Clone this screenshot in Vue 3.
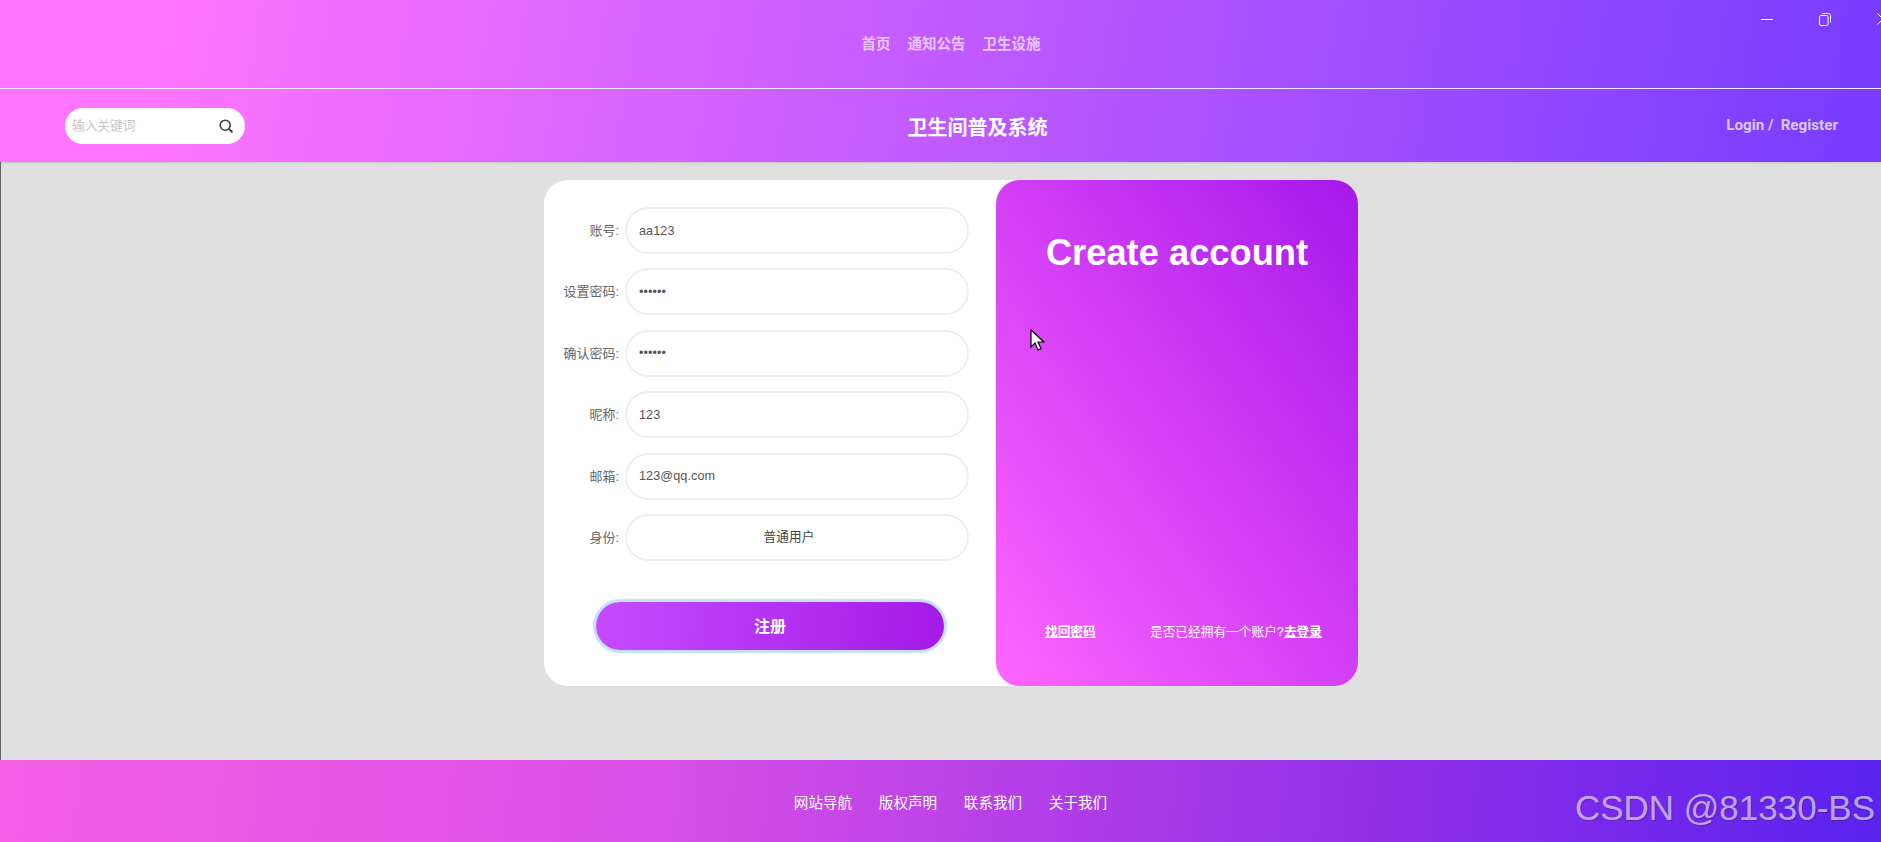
<template>
  <div class="page">
    <div class="top-bar">
      <div class="nav">
        <a v-for="item in navItems" :key="item">{{ item }}</a>
      </div>
      <div class="win-controls">
        <svg width="12" height="12" viewBox="0 0 12 12"><path d="M0 6.5h12" stroke="#fff" fill="none" /></svg>
        <svg width="12" height="14" viewBox="0 0 12 14"><rect x="0.5" y="3.5" width="8.5" height="10" rx="1.5" stroke="#fff" fill="none" /><path d="M3 1.5h6.5a2 2 0 0 1 2 2v7" stroke="#fff" fill="none" /></svg>
        <svg width="12" height="12" viewBox="0 0 12 12"><path d="M0.5 0.5l11 11M11.5 0.5l-11 11" stroke="#fff" fill="none" /></svg>
      </div>
      <div class="header">
        <div class="search">
          <input type="text" placeholder="输入关键词" />
          <svg width="14" height="14" viewBox="0 0 14 14"><circle cx="6.2" cy="6.2" r="5" stroke="#39404f" stroke-width="1.6" fill="none" /><path d="M10 10l3.400 3.400" stroke="#39404f" stroke-width="2" fill="none" /></svg>
        </div>
        <h1 class="title">卫生间普及系统</h1>
        <div class="login-links"><span>Login /</span><span>Register</span></div>
      </div>
    </div>

    <div class="main">
      <div class="card">
        <form class="form" @submit.prevent>
          <div class="row" v-for="field in fields" :key="field.label">
            <label>{{ field.label }}:</label>
            <input :type="field.type" :value="field.value" readonly />
          </div>
          <div class="row">
            <label>身份:</label>
            <select class="role">
              <option>普通用户</option>
            </select>
          </div>
          <button class="submit" type="submit">注册</button>
        </form>
        <div class="side">
          <h2>Create account</h2>
          <div class="side-links">
            <a class="link">找回密码</a>
            <span>是否已经拥有一个账户?<a class="link">去登录</a></span>
          </div>
        </div>
      </div>
    </div>

    <div class="footer">
      <a v-for="item in footerItems" :key="item">{{ item }}</a>
    </div>

    <div class="watermark">CSDN @81330-BS</div>
    <svg class="cursor" width="15" height="22" viewBox="0 0 15 22"><path d="M1 1v17l4-4 3 7 3-1.400-3-6.600h6z" fill="#fff" stroke="#000" stroke-width="1.200" /></svg>
  </div>
</template>

<script setup>
const navItems = ['首页', '通知公告', '卫生设施']
const footerItems = ['网站导航', '版权声明', '联系我们', '关于我们']

const fields = [
  { label: '账号', type: 'text', value: 'aa123' },
  { label: '设置密码', type: 'password', value: '123456' },
  { label: '确认密码', type: 'password', value: '123456' },
  { label: '昵称', type: 'text', value: '123' },
  { label: '邮箱', type: 'text', value: '123@qq.com' },
]
</script>

<style>
html,
body {
  margin: 0;
  background: #e0e0e0;
}
</style>

<style scoped>
.page {
  position: relative;
  height: 842px;
  overflow: hidden;
  display: flex;
  flex-direction: column;
  box-shadow: inset 1px 0 0 #666;
  font-family: "Liberation Sans", "Noto Sans CJK SC", sans-serif;
}

.top-bar {
  position: relative;
  height: 162px;
  flex: none;
  background: linear-gradient(100deg, #ff75ff 8%, #7a3dff 98%);
  box-shadow: 0 1px 2px rgba(0, 0, 0, 0.12);
}

.nav {
  height: 89px;
  box-sizing: border-box;
  padding: 0 0 4px 21px;
  display: flex;
  align-items: center;
  justify-content: center;
  gap: 17px;
  border-bottom: 1px solid #f1e4ff;
  font-size: 14.5px;
  font-weight: bold;
  color: rgba(255, 255, 255, 0.68);
}

.win-controls {
  position: absolute;
  top: 12px;
  left: 1761px;
  display: flex;
  align-items: center;
  gap: 46px;
}

.win-controls svg {
  flex: none;
}

.header {
  height: 73px;
  padding: 0 43px 0 65px;
  display: flex;
  align-items: center;
  justify-content: space-between;
}

.search {
  width: 180px;
  height: 36px;
  box-sizing: border-box;
  padding: 0 12px 0 7px;
  display: flex;
  align-items: center;
  justify-content: space-between;
  background: #fff;
  border-radius: 18px;
}

.search input {
  width: 120px;
  padding: 0;
  border: none;
  outline: none;
  background: transparent;
  font-size: 12.7px;
  font-family: inherit;
}

.search input::placeholder {
  color: #c6c6c6;
}

.title {
  margin: 1px 16px 0 0;
  font-size: 20px;
  font-weight: bold;
  color: #fff;
}

.login-links {
  display: flex;
  gap: 7px;
  font-family: Roboto, "Liberation Sans", sans-serif;
  font-size: 15.2px;
  font-weight: bold;
  color: rgba(255, 255, 255, 0.72);
  margin-bottom: 1px;
}

.main {
  flex: 1;
  padding: 18px 0 0 544px;
}

.card {
  width: 814px;
  height: 506px;
  display: flex;
  background: #fff;
  border-radius: 24px;
}

.form {
  width: 452px;
  flex: none;
  box-sizing: border-box;
  padding: 27px 0 0 10px;
}

.row {
  display: flex;
  align-items: center;
  gap: 6px;
  margin-bottom: 14.4px;
}

.row label {
  width: 65px;
  flex: none;
  padding-bottom: 2px;
  text-align: right;
  white-space: nowrap;
  font-size: 13px;
  color: #666;
}

.row input,
.role {
  width: 344px;
  height: 47px;
  box-sizing: border-box;
  padding: 0 12px;
  border: 2px solid #ebeef2;
  border-radius: 24px;
  outline: none;
  background: #fff;
  font-family: inherit;
  font-size: 12.6px;
  letter-spacing: 0.1px;
  color: #555;
}

.role {
  appearance: none;
  text-align-last: center;
  padding-right: 28px;
  color: #444;
}

.submit {
  display: block;
  width: 348px;
  height: 48px;
  margin: 41px 0 0 42px;
  padding-bottom: 3px;
  border: none;
  border-radius: 24px;
  background: linear-gradient(100deg, #c64cff, #a31ae6);
  box-shadow: 0 0 0 3px #c4e1fd;
  font-family: inherit;
  font-size: 16px;
  font-weight: bold;
  color: #fff;
}

.side {
  width: 362px;
  flex: none;
  box-sizing: border-box;
  padding: 0 36px 46px 49px;
  display: flex;
  flex-direction: column;
  justify-content: space-between;
  border-radius: 24px;
  background: linear-gradient(to top right, #ff66ff, #a618ec);
  color: #fff;
}

.side h2 {
  margin: 52px 13px 0 0;
  text-align: center;
  font-size: 36.3px;
  font-weight: bold;
}

.side-links {
  display: flex;
  justify-content: space-between;
  font-size: 12.7px;
}

.link {
  font-weight: bold;
  text-decoration: underline;
}

.footer {
  height: 82px;
  flex: none;
  box-sizing: border-box;
  padding-left: 20px;
  display: flex;
  align-items: center;
  justify-content: center;
  gap: 26.6px;
  background: linear-gradient(95deg, #f65fe6, #d850e6 35%, #8e2ee8 75%, #5a22ee);
  font-size: 14.6px;
  color: #fff;
}

.watermark {
  position: absolute;
  right: 6px;
  bottom: 14px;
  font-family: "Liberation Sans", sans-serif;
  font-size: 35px;
  color: rgba(255, 255, 255, 0.62);
  text-shadow: 1px 1px 1px rgba(0, 0, 0, 0.2);
}

.cursor {
  position: absolute;
  top: 329px;
  left: 1030px;
}
</style>
